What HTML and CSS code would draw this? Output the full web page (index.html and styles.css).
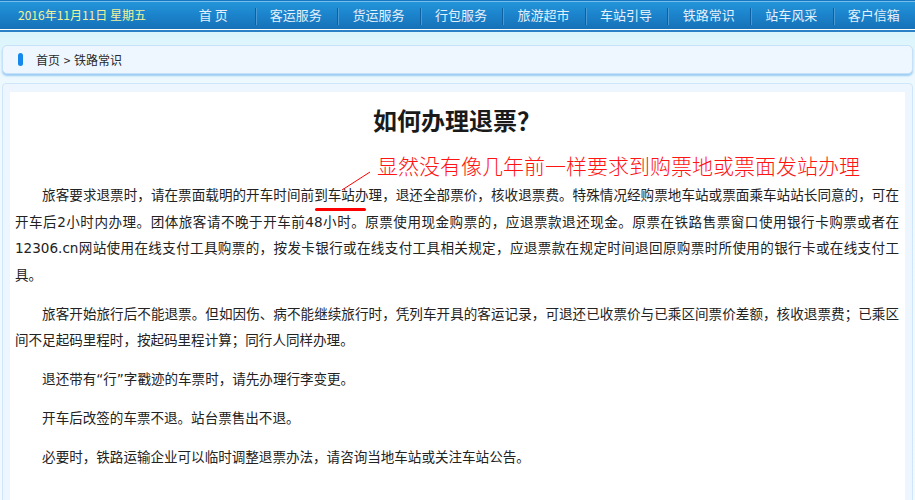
FILE: index.html
```html
<!DOCTYPE html>
<html lang="zh-CN">
<head>
<meta charset="utf-8">
<title>铁路常识</title>
<link rel="stylesheet" href="styles.css">
</head>
<body>
<header class="topbar">
  <div class="date">2016年11月11日 星期五</div>
  <nav class="nav">
    <a class="nav-item">首 页</a>
    <a class="nav-item">客运服务</a>
    <a class="nav-item">货运服务</a>
    <a class="nav-item">行包服务</a>
    <a class="nav-item">旅游超市</a>
    <a class="nav-item">车站引导</a>
    <a class="nav-item">铁路常识</a>
    <a class="nav-item">站车风采</a>
    <a class="nav-item">客户信箱</a>
  </nav>
</header>
<div class="page">
  <div class="crumb"><span class="crumb-mark"></span><span class="crumb-text">首页 &gt; 铁路常识</span></div>
  <div class="panel">
    <article class="article">
      <h1 class="title">如何办理退票？</h1>
      <p class="note">显然没有像几年前一样要求到购票地或票面发站办理</p>
      <p class="para">旅客要求退票时，请在票面载明的开车时间前<span class="hl">到车站办理</span>，退还全部票价，核收退票费。特殊情况经购票地车站或票面乘车站站长同意的，可在开车后2小时内办理。团体旅客请不晚于开车前48小时。原票使用现金购票的，应退票款退还现金。原票在铁路售票窗口使用银行卡购票或者在12306.cn网站使用在线支付工具购票的，按发卡银行或在线支付工具相关规定，应退票款在规定时间退回原购票时所使用的银行卡或在线支付工具。</p>
      <p class="para">旅客开始旅行后不能退票。但如因伤、病不能继续旅行时，凭列车开具的客运记录，可退还已收票价与已乘区间票价差额，核收退票费；已乘区间不足起码里程时，按起码里程计算；同行人同样办理。</p>
      <p class="para">退还带有“行”字戳迹的车票时，请先办理行李变更。</p>
      <p class="para">开车后改签的车票不退。站台票售出不退。</p>
      <p class="para">必要时，铁路运输企业可以临时调整退票办法，请咨询当地车站或关注车站公告。</p>
      <svg class="pointer" width="40" height="30" viewBox="0 0 40 30">
        <line x1="2" y1="24" x2="30" y2="6" stroke="#ff0000" stroke-width="1"/>
      </svg>
    </article>
  </div>
</div>
</body>
</html>
```
FILE: styles.css
```css
html, body {
  margin: 0;
  padding: 0;
}

body {
  width: 915px;
  height: 500px;
  overflow: hidden;
  font-family: "Noto Sans CJK SC", sans-serif;
  background: linear-gradient(to bottom, #d6f3fb 0, #d9f4fb 34px, #e7f7fd 60px, #eff9fe 90px, #f2faff 100%);
}

/* ---------- top bar ---------- */
.topbar {
  display: flex;
  height: 28px;
  border-top: 1px solid #1677c0;
  border-bottom: 1px solid #ffffff;
  background: linear-gradient(to bottom, #2496da 0, #1c85cd 45%, #1671b8 100%);
  box-shadow: inset 0 1px 0 #74bdec, 0 2px 0 #2a80c4;
}

.date {
  width: 154px;
  padding-left: 18px;
  font-size: 12px;
  line-height: 28px;
  color: #f2f29a;
  white-space: nowrap;
}

.nav {
  flex: 1;
  display: flex;
}

.nav-item {
  position: relative;
  flex: 1;
  text-align: center;
  font-size: 13px;
  line-height: 28px;
  color: #e4f0fc;
  white-space: nowrap;
}

.nav-item + .nav-item::before {
  content: "";
  position: absolute;
  left: 0;
  top: 7px;
  width: 1px;
  height: 17px;
  background: #10609f;
  box-shadow: 1px 0 0 #4a9ad6;
}

/* ---------- page ---------- */
.page {
  padding: 0 2px 0 2px;
}

.crumb {
  display: flex;
  align-items: center;
  height: 27px;
  margin-top: 15px;
  padding-left: 15px;
  border: 1px solid #c6e2f8;
  border-radius: 5px;
  background: #eef7ff;
  box-shadow: 0 2px 2px #9dccf3;
}

.crumb-mark {
  width: 5px;
  height: 13px;
  margin-right: 13px;
  border-radius: 3px;
  background: #1688ec;
}

.crumb-text {
  font-size: 12px;
  color: #2a2a2a;
  word-spacing: 1px;
}

.panel {
  margin-top: 9px;
  padding: 8px 7px 0 7px;
  border: 1px solid #cfe6fa;
  border-radius: 4px;
  background: #edf6ff;
}

.article {
  position: relative;
  min-height: 440px;
  padding: 0 6px 20px 5px;
  background: #ffffff;
  color: #222222;
}

.title {
  margin: 0;
  padding-top: 13px;
  font-size: 24px;
  line-height: 30px;
  font-weight: 700;
  text-align: center;
  color: #1a1a1a;
}

.note {
  margin: 15px 0 2px 362px;
  font-size: 21px;
  line-height: 30px;
  font-weight: 300;
  color: #ff1414;
  white-space: nowrap;
}

.para {
  margin: 0 0 12.5px 0;
  font-family: "DejaVu Sans", "Noto Sans CJK SC", sans-serif;
  font-size: 13.55px;
  line-height: 26.5px;
  text-indent: 2em;
  text-align: justify;
  text-spacing-trim: space-all;
}

.hl {
  position: relative;
}

.hl::after {
  content: "";
  position: absolute;
  left: 1px;
  top: calc(100% + 5px);
  width: 51px;
  height: 3px;
  border-radius: 2px;
  background: #ff0000;
}

.pointer {
  position: absolute;
  left: 330px;
  top: 74px;
  pointer-events: none;
}
```
